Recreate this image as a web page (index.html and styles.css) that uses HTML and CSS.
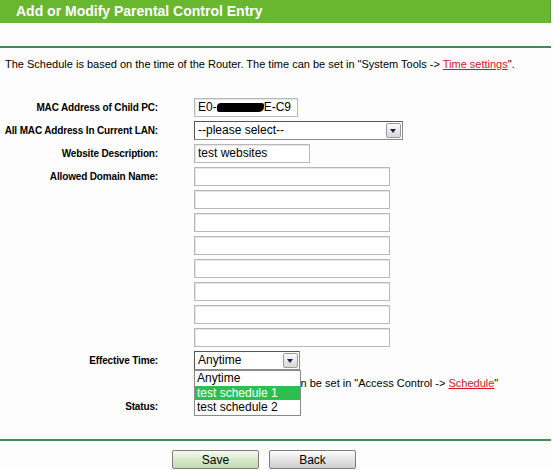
FILE: index.html
```html
<!DOCTYPE html>
<html lang="en">
<head>
  <meta charset="UTF-8" />
  <title>Parental Control</title>
  <link rel="stylesheet" href="styles.css">
</head>
<body>

<div class="title-bar">Add or Modify Parental Control Entry</div>
<div class="rule top-rule"></div>

<p class="note">The Schedule is based on the time of the Router. The time can be set in "System Tools -&gt; <a href="#">Time settings</a>".</p>

<div class="form">
  <div class="label">MAC Address of Child PC:</div>
  <div class="field"><div class="input w-mac">E0-<span class="blot"></span>E-C9</div></div>

  <div class="label">All MAC Address In Current LAN:</div>
  <div class="field"><div class="select w-lan">--please select--<span class="arrow"></span></div></div>

  <div class="label">Website Description:</div>
  <div class="field"><div class="input w-desc">test websites</div></div>

  <div class="label">Allowed Domain Name:</div>
  <div class="field domains">
    <div class="input w-dom"></div>
    <div class="input w-dom"></div>
    <div class="input w-dom"></div>
    <div class="input w-dom"></div>
    <div class="input w-dom"></div>
    <div class="input w-dom"></div>
    <div class="input w-dom"></div>
    <div class="input w-dom"></div>
  </div>

  <div class="label">Effective Time:</div>
  <div class="field">
    <div class="select w-time">Anytime<span class="arrow"></span>
      <ul class="options">
        <li>Anytime</li>
        <li class="picked">test schedule 1</li>
        <li>test schedule 2</li>
      </ul>
    </div>
  </div>

  <div class="label"></div>
  <div class="hint">The time schedule can be set in "Access Control -&gt; <a href="#">Schedule</a>"</div>

  <div class="label">Status:</div>
  <div class="field"></div>
</div>

<div class="rule bottom-rule"></div>

<div class="actions">
  <button class="btn save">Save</button>
  <button class="btn back">Back</button>
</div>

</body>
</html>
```

FILE: styles.css
```css
body { margin: 0; background: #fdfdfd; font-family: "Liberation Sans", Arial, sans-serif; font-size: 11px; color: #000; }

.title-bar {
  width: 534px; height: 23px; line-height: 23px; padding-left: 16px;
  background: #68b72f; border-right: 1px solid #5c9c36;
  color: #fff; font-size: 14px; font-weight: bold;
}

.rule { width: 551px; height: 2px; background: #3f8d55; }
.top-rule { margin-top: 23px; }
.bottom-rule { margin-top: 23px; }

.note { margin: 10px 0 0 5px; line-height: 13px; }
.note a, .hint a { color: #d4141e; }

.form {
  display: grid; grid-template-columns: 158px auto;
  column-gap: 36px; row-gap: 4px; margin-top: 27px;
}
.label {
  text-align: right; font-weight: bold; font-size: 10px; letter-spacing: -0.15px;
  line-height: 19px; height: 19px; white-space: nowrap;
}
.field { display: flex; align-items: center; min-height: 19px; }
.domains { flex-direction: column; align-items: flex-start; gap: 4px; }
.hint { line-height: 19px; padding-left: 2px; white-space: nowrap; }

.input {
  box-sizing: border-box; height: 19px; line-height: 17px; padding: 0 3px;
  border: 1px solid #b8b8b8; box-shadow: inset 1px 1px 0 #e6e6e6;
  background: #fff; font-size: 12px; white-space: nowrap; overflow: hidden;
}
.w-mac { width: 104px; }
.w-desc { width: 116px; }
.w-dom { width: 196px; }
.blot {
  display: inline-block; width: 47px; height: 9px; vertical-align: -1px;
  background: #000; border-radius: 4px 2px 5px 2px;
}

.select {
  position: relative; box-sizing: border-box; height: 19px; line-height: 17px;
  padding: 0 3px; border: 1px solid #8a8a8a; border-top-color: #555; border-left-color: #555;
  background: #fff; font-size: 12px;
}
.w-lan { width: 209px; }
.w-time { width: 106px; }
.arrow {
  position: absolute; right: 1px; top: 1px; width: 13px; height: 13px;
  border: 1px solid #9a9a9a; border-radius: 2px;
  background: linear-gradient(#fbfbfb, #d8d8d8);
}
.arrow::after {
  content: ""; position: absolute; left: 3px; top: 5px;
  border-left: 3.5px solid transparent; border-right: 3.5px solid transparent;
  border-top: 4px solid #1c2340;
}

.options {
  position: absolute; left: -1px; top: 18px; width: 107px; box-sizing: border-box;
  margin: 0; padding: 0; list-style: none;
  background: #fff; border: 1px solid #8a8a8a; font-size: 12px;
}
.options li { height: 14.5px; line-height: 14px; padding-left: 2px; }
.options .picked { background: #2cbf4f; color: #fff; }

.actions { display: flex; gap: 10px; margin: 9px 0 0 172px; }
.btn {
  box-sizing: border-box; width: 87px; height: 19px; padding: 0;
  border: 1px solid #7d7d7d; border-radius: 2px;
  font-family: "Liberation Sans", Arial, sans-serif; font-size: 12px; color: #000;
}
.save { background: linear-gradient(#f6fbf2, #d5e8c8 55%, #c3dbb2); }
.back { background: linear-gradient(#fdfdfd, #e2e2e2 55%, #cfcfcf); }
```
